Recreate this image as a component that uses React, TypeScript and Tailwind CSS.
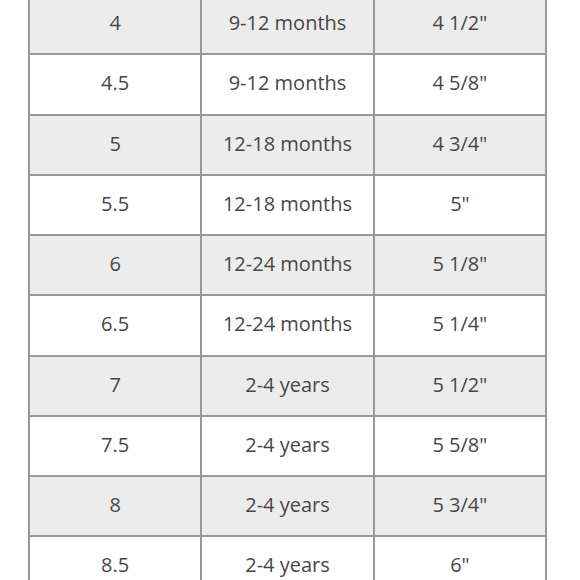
const rows = [
  ['4', '9-12 months', '4 1/2"'],
  ['4.5', '9-12 months', '4 5/8"'],
  ['5', '12-18 months', '4 3/4"'],
  ['5.5', '12-18 months', '5"'],
  ['6', '12-24 months', '5 1/8"'],
  ['6.5', '12-24 months', '5 1/4"'],
  ['7', '2-4 years', '5 1/2"'],
  ['7.5', '2-4 years', '5 5/8"'],
  ['8', '2-4 years', '5 3/4"'],
  ['8.5', '2-4 years', '6"'],
];

export default function App() {
  return (
    <div className="w-[580px] h-[580px] overflow-hidden bg-white">
      <div className="-mt-[7px] pl-[28px] pr-[33px]">
        <table
          className="w-full border-collapse table-fixed text-[20px] leading-none text-[#474747]"
          style={{ fontFamily: '"Open Sans", "Liberation Sans", sans-serif' }}
        >
          <tbody>
            {rows.map((r, i) => (
              <tr key={i} className={i % 2 === 0 ? 'bg-[#ececec]' : 'bg-white'}>
                {r.map((c, j) => (
                  <td
                    key={j}
                    className="h-[60.25px] border-2 border-[#999999] text-center align-middle p-0 pb-[2px]"
                  >
                    {c}
                  </td>
                ))}
              </tr>
            ))}
          </tbody>
        </table>
      </div>
    </div>
  );
}
